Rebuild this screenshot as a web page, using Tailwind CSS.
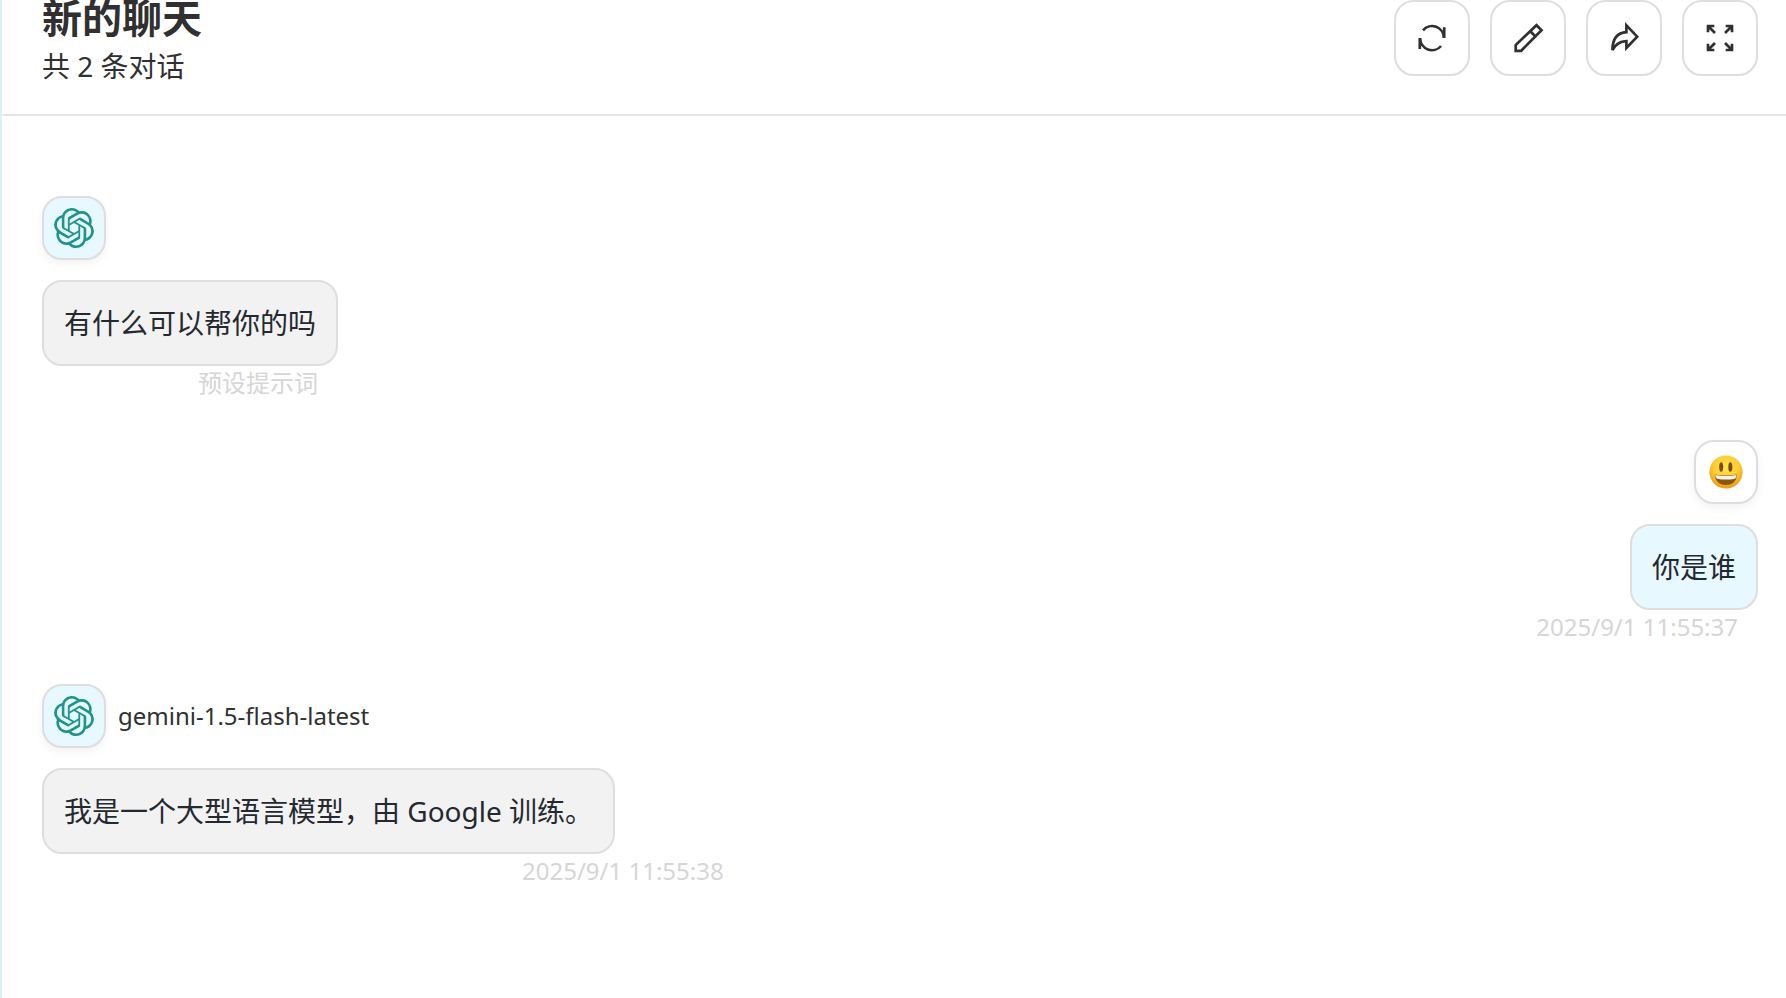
<!DOCTYPE html>
<html lang="zh-CN">
<head>
<meta charset="utf-8">
<meta name="viewport" content="width=device-width, initial-scale=1">
<title>新的聊天</title>
<script src="https://cdn.jsdelivr.net/npm/@tailwindcss/browser@4"></script>
</head>
<body class="min-h-screen overflow-x-hidden border-l-2 border-[#deeef6] bg-white font-['Noto_Sans','Noto_Sans_CJK_SC',sans-serif] text-[#303030]">
<svg class="hidden" aria-hidden="true">
  <symbol id="bot" viewBox="0 0 24 24"><path fill="#1f948c" d="M22.2819 9.8211a5.9847 5.9847 0 0 0-.5157-4.9108 6.0462 6.0462 0 0 0-6.5098-2.9A6.0651 6.0651 0 0 0 4.9807 4.1818a5.9847 5.9847 0 0 0-3.9977 2.9 6.0462 6.0462 0 0 0 .7427 7.0966 5.98 5.98 0 0 0 .511 4.9107 6.051 6.051 0 0 0 6.5146 2.9001A5.9847 5.9847 0 0 0 13.2599 24a6.0557 6.0557 0 0 0 5.7718-4.2058 5.9894 5.9894 0 0 0 3.9977-2.9001 6.0557 6.0557 0 0 0-.7475-7.0729zm-9.022 12.6081a4.4755 4.4755 0 0 1-2.8764-1.0408l.1419-.0804 4.7783-2.7582a.7948.7948 0 0 0 .3927-.6813v-6.7369l2.02 1.1686a.071.071 0 0 1 .038.052v5.5826a4.504 4.504 0 0 1-4.4945 4.4944zm-9.6607-4.1254a4.4708 4.4708 0 0 1-.5346-3.0137l.142.0852 4.783 2.7582a.7712.7712 0 0 0 .7806 0l5.8428-3.3685v2.3324a.0804.0804 0 0 1-.0332.0615L9.74 19.9502a4.4992 4.4992 0 0 1-6.1408-1.6464zM2.3408 7.8956a4.485 4.485 0 0 1 2.3655-1.9728V11.6a.7664.7664 0 0 0 .3879.6765l5.8144 3.3543-2.0201 1.1685a.0757.0757 0 0 1-.071 0l-4.8303-2.7865A4.504 4.504 0 0 1 2.3408 7.872zm16.5963 3.8558L13.1038 8.364 15.1192 7.2a.0757.0757 0 0 1 .071 0l4.8303 2.7913a4.4944 4.4944 0 0 1-.6765 8.1042v-5.6772a.79.79 0 0 0-.407-.667zm2.0107-3.0231l-.142-.0852-4.7735-2.7818a.7759.7759 0 0 0-.7854 0L9.409 9.2297V6.8974a.0662.0662 0 0 1 .0284-.0615l4.8303-2.7866a4.4992 4.4992 0 0 1 6.6802 4.66zM8.3065 12.863l-2.02-1.1638a.0804.0804 0 0 1-.038-.0567V6.0742a4.4992 4.4992 0 0 1 7.3757-3.4537l-.142.0805L8.704 5.459a.7948.7948 0 0 0-.3927.6813zm1.0976-2.3654l2.602-1.4998 2.6069 1.4998v2.9994l-2.5974 1.4997-2.6067-1.4997Z"/></symbol>
</svg>

<header class="flex items-start justify-between border-b-2 border-[#e5e5e5] pb-7 pl-10 pr-7">
  <div class="flex flex-col gap-2.5">
    <h1 class="text-[40px] leading-9 font-bold">新的聊天</h1>
    <p class="text-[28px] leading-10">共 2 条对话</p>
  </div>
  <div class="flex gap-5">
    <button type="button" aria-label="刷新" class="flex size-[76px] items-center justify-center rounded-[20px] border-2 border-[#dedede] bg-white">
      <svg class="size-8" viewBox="0 0 32 32" fill="none" stroke="#303030" stroke-width="2.67"><path d="M28.2 5.3V16M3.8 16V26.9M7 8.3A11.8 11.8 0 0 1 27.8 16M25 24A11.8 11.8 0 0 1 4.2 16.3"/></svg>
    </button>
    <button type="button" aria-label="编辑" class="flex size-[76px] items-center justify-center rounded-[20px] border-2 border-[#dedede] bg-white">
      <svg class="size-8" viewBox="0 0 32 32" fill="none" stroke="#303030" stroke-width="2.67"><path d="M3.7 28.8V23L24.5 3.2L29.5 8.2L9.2 28.8ZM18.3 9.3L23.5 14.5"/></svg>
    </button>
    <button type="button" aria-label="分享" class="flex size-[76px] items-center justify-center rounded-[20px] border-2 border-[#dedede] bg-white">
      <svg class="size-8" viewBox="0 0 32 32" fill="none" stroke="#303030" stroke-width="2.67"><path d="M18.4 3.4V10.2C9.5 10.7 4.6 17 4.4 28C8 21.500 12 19.4 18.4 19.200V26L29.200 14.7Z"/></svg>
    </button>
    <button type="button" aria-label="全屏" class="flex size-[76px] items-center justify-center rounded-[20px] border-2 border-[#dedede] bg-white">
      <svg class="size-8" viewBox="0 0 32 32" fill="none" stroke="#303030" stroke-width="2.67"><path d="M10.300 4H4V10.300M4 4L11 11M21.700 4H28V10.300M28 4L21 11M10.300 28H4V21.700M4 28L11 21M21.700 28H28V21.700M28 28L21 21"/></svg>
    </button>
  </div>
</header>

<main class="flex flex-col gap-10 pt-20 pr-7 pl-10">
  <article class="flex flex-col items-start">
    <div class="flex h-16 items-center">
      <div class="flex size-16 items-center justify-center rounded-[20px] border-2 border-[#dedede] bg-[#e7f8ff] shadow-[0_4px_8px_rgba(0,0,0,0.05)]"><svg class="size-10"><use href="#bot"/></svg></div>
    </div>
    <div>
      <p class="mt-5 rounded-[20px] border-2 border-[#dedede] bg-[#f2f2f2] px-5 py-5 text-[28px] leading-[42px] text-[#24292f]">有什么可以帮你的吗</p>
      <p class="pr-5 text-right text-2xl leading-[34px] text-[#d6d6d6]">预设提示词</p>
    </div>
  </article>

  <article class="flex flex-col items-end">
    <div class="flex size-16 items-center justify-center rounded-[20px] border-2 border-[#dedede] bg-white shadow-[0_4px_8px_rgba(0,0,0,0.05)]">
      <svg class="size-9" viewBox="0 0 36 36" role="img" aria-label="笑脸">
        <defs>
          <radialGradient id="face" cx="50%" cy="35%" r="65%"><stop offset="0" stop-color="#ffe34d"/><stop offset=".6" stop-color="#fecb2e"/><stop offset="1" stop-color="#f09418"/></radialGradient>
        </defs>
        <circle cx="18" cy="18" r="16.600" fill="url(#face)"/>
        <ellipse cx="13.200" cy="13" rx="2" ry="4.700" fill="#7a4a0a"/>
        <ellipse cx="22.300" cy="13" rx="2" ry="4.700" fill="#7a4a0a"/>
        <path d="M6.700 20.500Q18 22.500 29 20.500C28.500 28 24 31 18 31S7.300 28 6.700 20.500Z" fill="#8a5608"/>
        <path d="M7.200 21Q18 23 28.500 21Q28.800 24 27 24.700Q18 26.500 9 24.700Q7.200 24 7.200 21Z" fill="#f4f4f4"/>
      </svg>
    </div>
    <p class="mt-5 rounded-[20px] border-2 border-[#dedede] bg-[#e7f8ff] px-5 py-5 text-[28px] leading-[42px] text-[#24292f]">你是谁</p>
    <time class="pr-5 text-2xl leading-[34px] text-[#d6d6d6]">2025/9/1 11:55:37</time>
  </article>

  <article class="flex flex-col items-start">
    <div class="flex h-16 items-center gap-3">
      <div class="flex size-16 items-center justify-center rounded-[20px] border-2 border-[#dedede] bg-[#e7f8ff] shadow-[0_4px_8px_rgba(0,0,0,0.05)]"><svg class="size-10"><use href="#bot"/></svg></div>
      <span class="text-2xl">gemini-1.5-flash-latest</span>
    </div>
    <p class="mt-5 rounded-[20px] border-2 border-[#dedede] bg-[#f2f2f2] px-5 py-5 text-[28px] leading-[42px] text-[#24292f]">我是一个大型语言模型，由 Google 训练。</p>
    <time class="pl-[480px] text-2xl leading-[34px] text-[#d6d6d6]">2025/9/1 11:55:38</time>
  </article>
</main>
</body>
</html>
